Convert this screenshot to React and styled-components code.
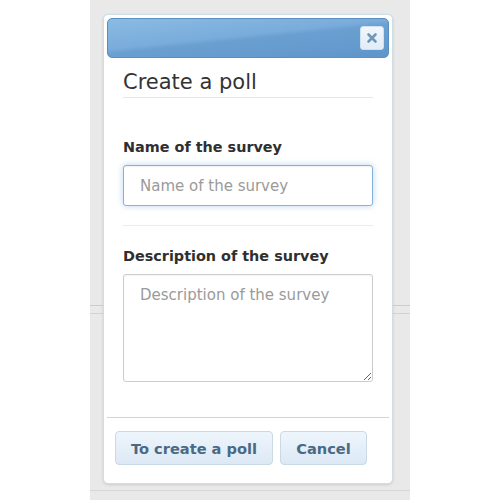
import React from "react";
import styled, { createGlobalStyle } from "styled-components";

const Global = createGlobalStyle`
  html, body { margin: 0; padding: 0; background: #ffffff; }
  body { font-family: "DejaVu Sans", Verdana, sans-serif; }
  * { box-sizing: border-box; }
`;

const Page = styled.div`
  width: 500px;
  height: 500px;
  display: flex;
  justify-content: center;
`;

const Backdrop = styled.div`
  width: 320px;
  height: 500px;
  background:
    linear-gradient(#cdcdcd, #cdcdcd) 0 305px / 100% 1px no-repeat,
    linear-gradient(#d2d2d2, #d2d2d2) 0 313px / 100% 1px no-repeat,
    linear-gradient(#d6d6d6, #d6d6d6) 0 490px / 100% 1px no-repeat,
    #e9e9e9;
  padding: 14px 0 0 13px;
`;

const Dialog = styled.div`
  width: 290px;
  background: #ffffff;
  border: 1px solid #cfdde6;
  border-radius: 5px;
  padding: 3px;
  box-shadow: 0 1px 3px rgba(0, 0, 0, 0.12);
  display: flex;
  flex-direction: column;
`;

const Header = styled.div`
  height: 40px;
  border-radius: 5px;
  background: linear-gradient(174deg, #8bbbe3 0%, #79acdb 45%, #6a9fd1 52%, #5f96ca 100%);
  border: 1px solid #5b8fc0;
  display: flex;
  align-items: center;
  justify-content: flex-end;
  padding-right: 4px;
`;

const CloseButton = styled.button`
  width: 24px;
  height: 24px;
  border: 1px solid #cfe0ef;
  border-radius: 3px;
  background: linear-gradient(#f1f6fb, #e2ecf6);
  display: flex;
  align-items: center;
  justify-content: center;
  padding: 0;
`;

const Body = styled.div`
  padding: 0 16px;
  display: flex;
  flex-direction: column;
`;

const Title = styled.h2`
  margin: 10px 0 0;
  font-size: 21px;
  line-height: 28px;
  font-weight: normal;
  color: #333333;
  padding-bottom: 1px;
  border-bottom: 1px solid #e6e6e6;
`;

const Label = styled.label`
  display: block;
  font-size: 14.4px;
  line-height: 18px;
  font-weight: bold;
  color: #2f2f2f;
  margin-top: ${(p) => p.$top}px;
`;

const TextInput = styled.input`
  margin-top: 9px;
  width: 100%;
  height: 41px;
  border: 1px solid #86b3db;
  border-radius: 3px;
  padding: 0 16px;
  font-family: inherit;
  font-size: 15px;
  color: #333;
  box-shadow: inset 0 1px 1px rgba(0, 0, 0, 0.06), 0 0 6px rgba(102, 160, 220, 0.45);
  outline: none;
  &::placeholder { color: #9a9a9a; }
`;

const Separator = styled.div`
  height: 1px;
  background: #ececec;
  margin-top: 19px;
`;

const TextArea = styled.textarea`
  margin-top: 9px;
  width: 100%;
  height: 108px;
  border: 1px solid #cccccc;
  border-radius: 3px;
  padding: 10px 16px;
  font-family: inherit;
  font-size: 15px;
  line-height: 20px;
  color: #333;
  outline: none;
  box-shadow: inset 0 1px 1px rgba(0, 0, 0, 0.04);
  &::placeholder { color: #9a9a9a; }
`;

const Footer = styled.div`
  margin-top: 35px;
  border-top: 1px solid #c9d7e0;
  padding: 13px 8px 15px;
  display: flex;
  gap: 7px;
`;

const Button = styled.button`
  width: ${(p) => p.$w}px;
  height: 34px;
  border: 1px solid #cad9e6;
  border-radius: 4px;
  background: linear-gradient(#eef5fc, #dce9f5);
  font-family: "DejaVu Sans", Verdana, sans-serif;
  font-weight: bold;
  font-size: 14.6px;
  color: #4a6984;
  padding: 0;
`;

export default function App() {
  return (
    <>
      <Global />
      <Page>
        <Backdrop>
          <Dialog>
            <Header>
              <CloseButton aria-label="close">
                <svg width="12" height="12" viewBox="0 0 12 12">
                  <path d="M2.5 2.5 L9.5 9.5 M9.5 2.5 L2.5 9.5" stroke="#6f97b9" strokeWidth="2.6" strokeLinecap="round" />
                </svg>
              </CloseButton>
            </Header>
            <Body>
              <Title>Create a poll</Title>
              <Label $top={40}>Name of the survey</Label>
              <TextInput placeholder="Name of the survey" />
              <Separator />
              <Label $top={21}>Description of the survey</Label>
              <TextArea placeholder="Description of the survey" />
            </Body>
            <Footer>
              <Button $w={158}>To create a poll</Button>
              <Button $w={87}>Cancel</Button>
            </Footer>
          </Dialog>
        </Backdrop>
      </Page>
    </>
  );
}
